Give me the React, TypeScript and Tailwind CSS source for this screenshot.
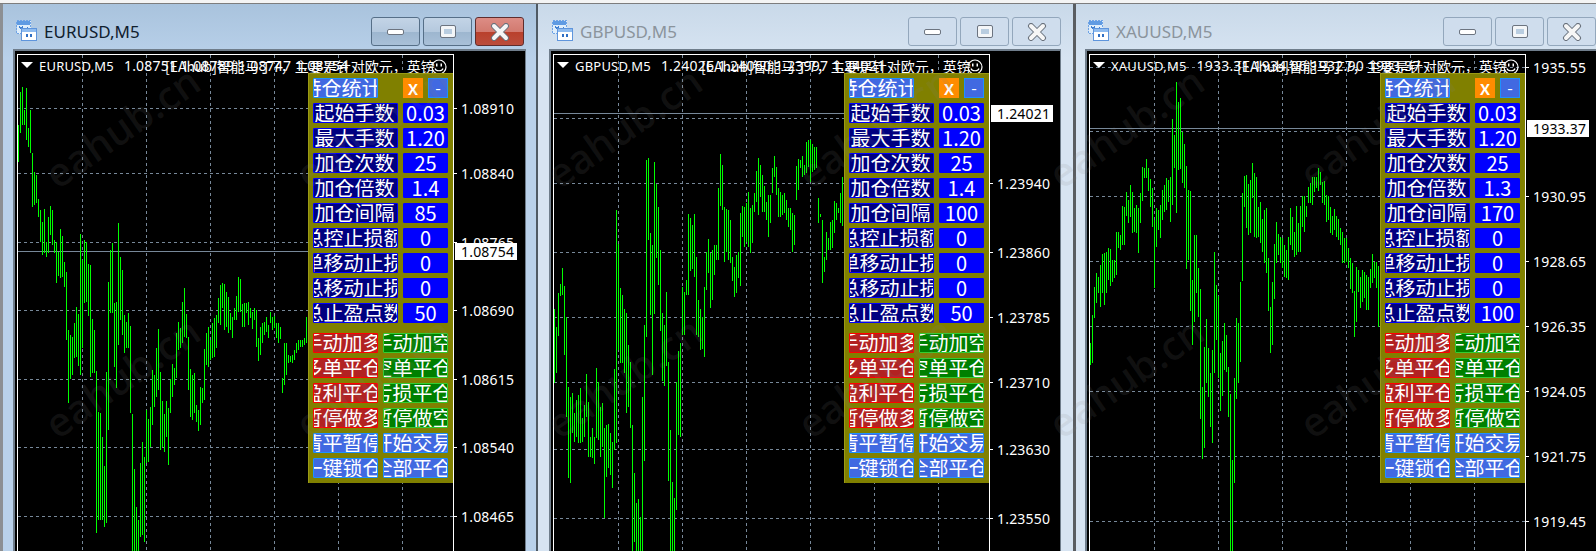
import React from "react";

const W1 = "195-305 95-218 82-195 150-195 85-240 205-260 150-280 280-440 335-435 345-430 418-470 450-545 487-585 448-580 545-590 470-580 438-525 450-555 540-580 545-668 575-648 508-655 528-650 605-682 637-840 810-1030 825-958 830-945 790-895 742-890 762-917 523-945 600-865 540-730 545-725 613-768 615-950 778-940 810-940 932-1420 1055-1380 1060-1380 1130-1380 1218-1402 935-1390 665-1110 570-760 550-760 730-920 725-985 488-855 592-780 630-825 765-880 785-865 760-865 798-1060 1062-1473 1228-1473 1340-1473 1380-1473 1210-1430 1145-1425 1190-1445 1050-1210 1078-1205 1040-1160 930-1095 945-1040 865-1010 808-990 935-1170 1023-1160 1062-1175 1023-1130 1045-1215 958-1060 912-1010 925-975 820-955 785-870 805-865 725-850 685-830 762-835 830-990 928-1070 945-1080 940-1060 1035-1085 1050-1112 982-1095 985-1030 868-1020 820-915 800-920 840-900 790-895 775-892 765-865 715-790 675-795 670-745 672-810 695-800 712-820 760-810 770-835 745-780 708-780 652-755 657-755 732-800 730-800 730-760 725-795 745-775 755-808 745-780 750-862 835-902 800-885 790-850 785-825 772-815 795-835 755-790 770-810 768-805 790-835 790-850 800-838 955-1000 850-975 848-945 885-910 888-905 885-908 870-900 850-880 840-870 840-860 840-860 835-855 770-850";
const W2 = "747-968 800-940 700-828 672-708 625-705 678-885 770-1070 982-1255 1010-1270 998-1120 1060-1145 1020-1130 1005-1150 985-1150 1075-1145 1035-1130 943-1070 1027-1192 1130-1190 1105-1195 1130-1212 925-1135 965-1140 1040-1190 1028-1160 1105-1375 1095-1250 1092-1225 1120-1245 1145-1285 928-1170 450-1150 553-870 685-908 705-910 748-938 760-1060 855-1040 907-1105 1095-1473 1238-1445 1330-1473 1318-1473 1372-1473 1012-1473 795-1202 300-832 295-540 520-765 555-945 305-762 372-595 440-675 570-812 760-962 795-978 697-918 907-1262 1110-1473 1265-1473 1315-1473 965-1350 873-1125 850-1130 680-825 695-825 660-705 462-705 473-632 495-628 462-650 590-825 720-830 748-870 770-868 682-890 575-690 538-640 578-745 570-720 555-645 555-600 385-600 282-438 315-450 442-605 448-575 450-600 480-610 590-662 620-710 585-700 575-655 460-678 438-530 440-560 430-545 395-560 445-580 435-548 400-455 333-425 295-465 315-410 345-455 378-455 425-480 405-530 405-488 325-400 288-350 320-405 385-472 395-470 405-465 400-460 420-480 445-500 443-510 460-575 465-555 318-420 298-390 300-325 288-350 315-345 245-340 240-320 240-365 252-335 262-330 262-325 415-490 462-470 480-670 592-635 515-600 535-570 487-570 480-565 423-520 430-480 445-460 400-490 350-498";
const W3 = "850-915 765-908 680-775 640-730 650-700 615-740 582-700 578-735 575-698 565-660 568-678 600-665 600-655 515-645 515-565 525-570 438-555 440-555 395-468 420-488 375-470 395-518 445-515 435-518 445-578 400-490 322-422 325-355 298-355 325-392 358-442 385-502 480-685 445-562 450-510 435-535 390-480 375-455 355-450 360-425 350-485 178-435 225-325 65-458 125-330 115-328 215-370 252-385 318-628 390-600 392-752 660-855 525-785 525-700 625-770 688-1078 980-1198 860-1165 778-968 865-1010 940-1100 870-1148 575-940 675-840 708-955 880-1052 842-1008 790-930 825-935 920-1070 1002-1473 1200-1473 955-1268 775-1018 790-968 665-905 398-662 348-440 345-505 372-525 360-520 310-415 340-530 350-535 440-530 425-550 478-575 450-610 445-640 595-752 742-878 665-855 552-718 487-610 522-585 530-610 535-625 555-650 570-655 530-660 445-555 470-570 515-590 438-585 488-575 438-575 408-500 408-515 438-470 380-430 370-430 350-435 350-395 350-385 325-392 335-375 365-430 362-435 405-485 408-480 440-520 468-525 448-510 468-530 478-540 505-555 515-610 535-610 535-605 565-625 595-688 610-700 693-830 622-785 630-695 650-745 630-725 635-715 645-750 650-750 628-685 582-670 605-655 605-685 618-800";

const cjk = '"Noto Sans CJK SC", "Noto Sans", sans-serif';

function MtIcon() {
  return (
    <svg width="22" height="22" viewBox="0 0 22 22" shapeRendering="crispEdges" className="flex-none mt-[3px]">
      <rect x="0.5" y="0.5" width="14" height="13" fill="#dfeefb" stroke="#6ea3e6" strokeDasharray="2 1" />
      <rect x="1" y="1" width="13" height="4" fill="#5f9be3" />
      <path d="M3 6l2 3 2-3M8 8l2 2 2-3" stroke="#3f7fd0" fill="none" />
      <rect x="5.5" y="8.5" width="15" height="12" fill="#ffffff" stroke="#5f95dc" />
      <rect x="6" y="9" width="14" height="3" fill="#8fbcf0" />
      <path d="M10 14l1 3 1-3M14 14l1 3 1-3" stroke="#2f6fc4" fill="none" />
    </svg>
  );
}

function Caption({ active }: { active: boolean }) {
  const base = "w-[49px] h-[29px] rounded-[3px] border flex items-center justify-center flex-none";
  const plain = active
    ? "bg-[linear-gradient(#c3d4e6_0%,#b5c9de_50%,#9db6cf_52%,#a9c0d8_100%)] border-[#566f88]"
    : "bg-[#cfdded] border-[#93a7bc]";
  const closeCls = active
    ? "bg-[linear-gradient(#dd8d85_0%,#d27a70_50%,#b9402c_52%,#bb4d3c_100%)] border-[#5f2d2d]"
    : "bg-[#cfdded] border-[#93a7bc]";
  return (
    <div className="flex gap-[3px] flex-none">
      <div className={`${base} ${plain}`}>
        <div className="w-[17px] h-[6px] bg-white border border-[#6c7480] rounded-[2px]" />
      </div>
      <div className={`${base} ${plain}`}>
        <div className="w-[14px] h-[11px] bg-[#b9cde0] border-[3px] border-[#f4f6f8] outline outline-1 outline-[#6c7480] rounded-[1px]" />
      </div>
      <div className={`${base} ${closeCls}`}>
        <svg width="20" height="18" viewBox="0 0 20 18">
          <path d="M4 3l12 12M16 3L4 15" stroke="#69717c" strokeWidth="6" strokeLinecap="round" />
          <path d="M4 3l12 12M16 3L4 15" stroke="#f6f6f6" strokeWidth="4" strokeLinecap="round" />
        </svg>
      </div>
    </div>
  );
}

function Btn({ text, cls, w, shift = "" }: { text: string; cls: string; w: string; shift?: string }) {
  return (
    <div className={`${w} h-[20px] flex-none flex items-center justify-center overflow-hidden whitespace-nowrap border rounded-[1px] text-white text-[20px] leading-none ${cls}`}>
      <span className={`flex-none ${shift}`}>{text}</span>
    </div>
  );
}

const RED = "bg-[#b22222] border-[#ff0000]";
const GREEN = "bg-[#008000] border-[#32cd32]";
const BLUE = "bg-[#4169e1] border-[#1e90ff]";

const LABELS = ["起始手数", "最大手数", "加仓次数", "加仓倍数", "加仓间隔", "总控止损额", "单移动止损", "总移动止损", "总止盈点数"];
const ACTIONS: [string, string, string, string][] = [
  ["手动加多", RED, "手动加空", GREEN],
  ["多单平仓", RED, "空单平仓", GREEN],
  ["盈利平仓", RED, "亏损平仓", GREEN],
  ["暂停做多", RED, "暂停做空", GREEN],
  ["清平暂停", BLUE, "开始交易", BLUE],
  ["一键锁仓", BLUE, "全部平仓", BLUE],
];

function Panel({ values }: { values: string[] }) {
  return (
    <div
      className="absolute left-[290px] top-[18px] w-[145px] h-[410px] bg-[#808000] border-t border-l border-[#9a9a14] flex flex-col gap-[5px] pt-[4px] pl-[4px]"
      style={{ fontFamily: cjk }}
    >
      <div className="flex gap-[5px] items-center">
        <Btn text="持仓统计" cls={BLUE} w="w-[65px]" shift="-translate-x-[4px]" />
        <div className="w-[20px] h-[20px] ml-[20px] flex-none bg-[#ff8c00] text-white text-[20px] font-medium leading-none pb-[3px] flex items-center justify-center">x</div>
        <div className="w-[20px] h-[20px] flex-none bg-[#4169e1] border border-[#1e90ff] text-white text-[16px] leading-none pb-[2px] flex items-center justify-center">-</div>
      </div>
      {LABELS.map((l, i) => (
        <div key={l} className="flex gap-[5px]">
          <Btn text={l} cls="bg-[#000080] border-[#0000ff]" w="w-[85px]" shift={i > 4 ? "-translate-x-[2px]" : "-translate-x-[1px]"} />
          <Btn text={values[i]} cls="bg-[#0000ff] border-[#0000ff]" w="w-[45px]" />
        </div>
      ))}
      <div className="h-0 flex-none" />
      {ACTIONS.map(([a, ac, b, bc]) => (
        <div key={a} className="flex gap-[5px]">
          <Btn text={a} cls={ac} w="w-[65px]" shift="-translate-x-[3px]" />
          <Btn text={b} cls={bc} w="w-[65px]" shift="-translate-x-[3px]" />
        </div>
      ))}
    </div>
  );
}

function Smiley() {
  return (
    <svg width="16" height="16" viewBox="0 0 16 16" className="absolute left-[413px] top-[4px]">
      <circle cx="8" cy="8" r="7" fill="none" stroke="#fff" strokeWidth="1.2" />
      <rect x="5" y="4.5" width="1.5" height="3" fill="#fff" />
      <rect x="9.5" y="4.5" width="1.5" height="3" fill="#fff" />
      <path d="M4 9.5c1 3 7 3 8 0" fill="none" stroke="#fff" strokeWidth="1.2" />
    </svg>
  );
}

type Chart = {
  symbol: string;
  ohlc: string;
  bars: string;
  grid: number[];
  line: number;
  values: string[];
  labels: [string, number][];
  bid: string;
};

function Plot({ c }: { c: Chart }) {
  const bars = c.bars.split(" ").map((s) => s.split("-").map(Number));
  return (
    <div className="relative w-[437px] flex-none border-x border-t border-white">
      <svg width="435" height="497" className="absolute left-0 top-0" shapeRendering="crispEdges">
        {c.grid.map((y) => (
          <line key={y} x1="0" x2="435" y1={y + 0.5} y2={y + 0.5} stroke="#778899" strokeDasharray="3 3" />
        ))}
        {[64, 128, 192, 256, 320, 384].map((x) => (
          <line key={x} x1={x + 0.5} x2={x + 0.5} y1="0" y2="497" stroke="#778899" strokeDasharray="3 3" />
        ))}
        <line x1="0" x2="435" y1={c.line + 0.5} y2={c.line + 0.5} stroke="#778899" />
        {bars.map(([a, b], i) => {
          const y1 = Math.round(a / 3 + 5);
          const y2 = Math.round(b / 3 + 5);
          return <rect key={i} x={i * 2} y={y1} width="1" height={y2 - y1} fill="#00ff00" />;
        })}
      </svg>
      <div className="absolute left-[3px] top-[7px] w-0 h-0 border-x-[6px] border-x-transparent border-t-[6px] border-t-white" />
      <div className="absolute left-[21px] top-[2px] flex gap-[10px] items-center text-white leading-[18px] whitespace-pre" style={{ fontFamily: '"Noto Sans", sans-serif' }}>
        <span className="text-[13px] tracking-[0.2px]">{c.symbol}</span>
        <span className="text-[14px] tracking-[0.2px]">{c.ohlc}</span>
      </div>
      <div className="absolute left-[147px] top-[2px] text-white text-[14px] leading-[18px] whitespace-pre" style={{ fontFamily: cjk }}>
        [EAhub]智能马丁7，主要是针对欧元，英镑
      </div>
      <Smiley />
      <Panel values={c.values} />
    </div>
  );
}

function Axis({ c }: { c: Chart }) {
  return (
    <div className="relative flex-1 min-w-0 text-white text-[14px] tracking-[0.2px] leading-[18px]" style={{ fontFamily: '"Noto Sans", sans-serif' }}>
      {c.labels.map(([t, y]) => (
        <div key={t} className="absolute left-0 flex items-center h-[18px]" style={{ top: y - 8 }}>
          <div className="w-[3px] h-px bg-white mr-[4px] -mt-[2px]" />
          <span>{t}</span>
        </div>
      ))}
      <div className="absolute left-[1px] w-[62px] h-[17px] bg-white text-black pl-[6px] flex items-center" style={{ top: c.line - 8 + 1 }}>
        {c.bid}
      </div>
    </div>
  );
}

function Window({ c, active, cls, chartCls, titleCls }: { c: Chart; active: boolean; cls: string; chartCls: string; titleCls: string }) {
  return (
    <div className={`flex flex-col h-full flex-none ${cls}`}>
      <div className={`h-[45px] flex-none flex items-start pt-[13px] ${titleCls}`}>
        <MtIcon />
        <div
          className={`ml-[6px] mt-[3px] text-[17px] leading-[24px] flex-1 ${active ? "text-[#10202e]" : "text-[#8b949c]"}`}
          style={{ fontFamily: '"Noto Sans", sans-serif' }}
        >
          {c.symbol}
        </div>
        <Caption active={active} />
      </div>
      <div className={`flex-1 min-h-0 flex bg-black border-t-2 border-l-2 border-[#6f7d8b] pt-[3px] pl-[2px] overflow-hidden ${chartCls}`}>
        <Plot c={c} />
        <Axis c={c} />
      </div>
    </div>
  );
}

const charts: Chart[] = [
  {
    symbol: "EURUSD,M5",
    ohlc: "1.08751 1.08789 1.08747 1.08754",
    bars: W1,
    grid: [53, 118, 187, 255, 324, 392, 461],
    line: 196,
    values: ["0.03", "1.20", "25", "1.4", "85", "0", "0", "0", "50"],
    labels: [["1.08910", 54], ["1.08840", 119], ["1.08765", 188], ["1.08690", 256], ["1.08615", 325], ["1.08540", 393], ["1.08465", 462]],
    bid: "1.08754",
  },
  {
    symbol: "GBPUSD,M5",
    ohlc: "1.24026 1.24060 1.23997 1.24021",
    bars: W2,
    grid: [63, 128, 197, 262, 327, 394, 463],
    line: 58,
    values: ["0.03", "1.20", "25", "1.4", "100", "0", "0", "0", "50"],
    labels: [["1.23940", 129], ["1.23860", 198], ["1.23785", 263], ["1.23710", 328], ["1.23630", 395], ["1.23550", 464]],
    bid: "1.24021",
  },
  {
    symbol: "XAUUSD,M5",
    ohlc: "1933.31 1934.06 1932.90 1933.37",
    bars: W3,
    grid: [12, 76, 141, 206, 271, 336, 401, 466],
    line: 73,
    values: ["0.03", "1.20", "25", "1.3", "170", "0", "0", "0", "100"],
    labels: [["1935.55", 13], ["1930.95", 142], ["1928.65", 207], ["1926.35", 272], ["1924.05", 337], ["1921.75", 402], ["1919.45", 467]],
    bid: "1933.37",
  },
];

const marks: [number, number][] = [];
for (const y of [127, 377]) for (const x of [122, 373, 624, 875, 1126, 1377]) marks.push([x, y]);

export default function App() {
  return (
    <div className="relative w-[1596px] h-[551px] overflow-hidden bg-[#f2f2f2] flex flex-col">
      <div className="h-[3px] flex-none bg-[#f4f4f4]" />
      <div className="flex-1 min-h-0 flex border-t border-[#7d7d7d]">
        <Window
          c={charts[0]}
          active
          cls="w-[538px] bg-[linear-gradient(#a9c3dd_0%,#b9d1ea_10%,#b9d1ea_100%)] border-l-[3px] border-l-[#8c8f93] border-r-2 border-r-[#4f5a64] pl-[10px] pr-[10px]"
          chartCls="border-r border-r-[#6f7d8b]"
          titleCls="pr-[2px] pl-[3px]"
        />
        <Window
          c={charts[1]}
          active={false}
          cls="w-[538px] bg-[linear-gradient(#c9d9e9_0%,#d7e4f2_10%,#d7e4f2_100%)] border-r-[3px] border-r-[#5a5d61] pl-[11px] pr-[12px]"
          chartCls="border-r border-r-[#6f7d8b]"
          titleCls="pl-[3px]"
        />
        <Window
          c={charts[2]}
          active={false}
          cls="w-[520px] bg-[linear-gradient(#c9d9e9_0%,#d7e4f2_10%,#d7e4f2_100%)] pl-[9px]"
          chartCls=""
          titleCls="pl-[3px]"
        />
      </div>
      {marks.map(([x, y]) => (
        <div
          key={`${x}-${y}`}
          className="absolute w-[220px] text-center text-[40px] leading-none font-semibold text-[rgba(128,128,128,0.13)] rotate-[-35deg] pointer-events-none select-none"
          style={{ left: x - 110, top: y - 20, fontFamily: '"Open Sans", sans-serif' }}
        >
          eahub.cn
        </div>
      ))}
    </div>
  );
}
